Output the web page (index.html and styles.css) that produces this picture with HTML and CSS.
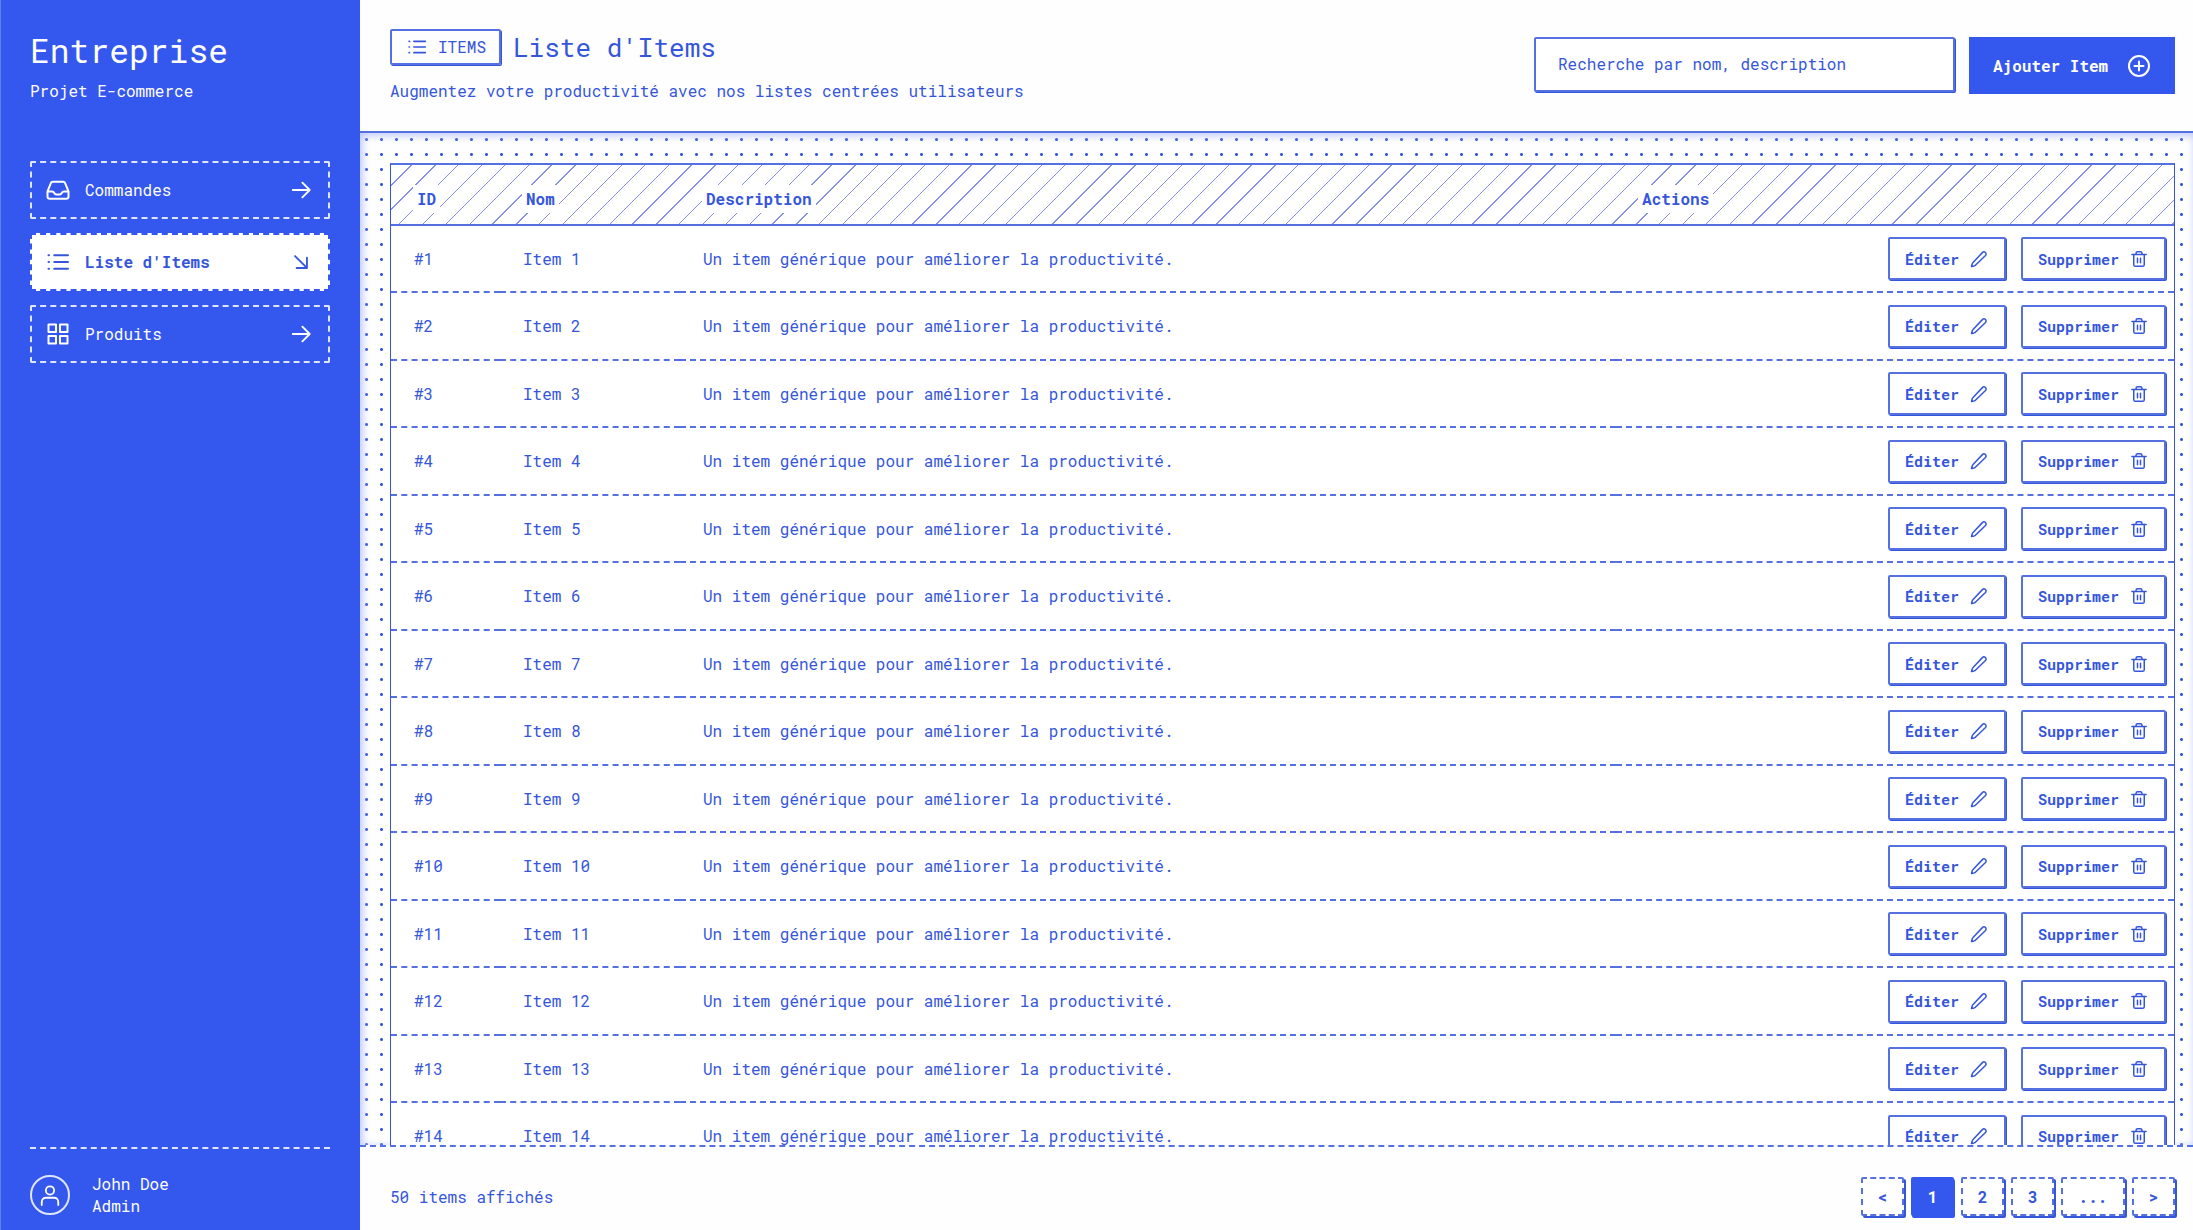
FILE: index.html
```html
<!DOCTYPE html>
<html lang="fr">
<head>
<meta charset="utf-8">
<title>Liste d'Items</title>
<link rel="stylesheet" href="styles.css">
</head>
<body>
<svg class="sprite" aria-hidden="true">
  <symbol id="inbox" viewBox="0 0 24 24"><path d="M1.500 13.500h4.610a2.250 2.250 0 0 1 2.010 1.240l.26.52a2.250 2.250 0 0 0 2.010 1.240h3.220a2.250 2.250 0 0 0 2.010-1.240l.26-.52a2.250 2.250 0 0 1 2.010-1.240h4.610M1.500 13.840V18.500a2.250 2.250 0 0 0 2.250 2.250h16.500a2.250 2.250 0 0 0 2.250-2.250v-4.660c0-.23-.04-.45-.1-.66L19.240 5.340a2.250 2.250 0 0 0-2.150-1.590H6.910a2.250 2.250 0 0 0-2.150 1.590L1.600 13.180a2.250 2.250 0 0 0-.1.66Z"/></symbol>
  <symbol id="list" viewBox="0 0 24 24"><path d="M8.25 5.25H22M8.25 12H22M8.25 18.75H22M2.5 5.25h.5M2.5 12h.5M2.5 18.75h.5"/></symbol>
  <symbol id="grid" viewBox="0 0 24 24"><path d="M2.500 2.500h7.500v7.500H2.500zM14 2.500h7.500v7.500H14zM2.500 14h7.500v7.500H2.500zM14 14h7.500v7.500H14z"/></symbol>
  <symbol id="arrow" viewBox="0 0 24 24"><path d="M13.5 4 21.500 12l-8 8M21.500 12H3"/></symbol>
  <symbol id="arrow-down" viewBox="0 0 24 24"><path d="m5.500 5.500 13 13m0 0V7.250m0 11.250H7.250"/></symbol>
  <symbol id="pencil" viewBox="0 0 24 24"><path d="M16.500 3.500a2.700 2.700 0 0 1 4.200 3.900L7.500 19.900a5 5 0 0 1-2.100 1.300l-3.400.9.9-3.400a5 5 0 0 1 1.200-2.100Z"/></symbol>
  <symbol id="trash" viewBox="0 0 24 24"><path d="M2.500 6h19M5 6v13.500A2.250 2.250 0 0 0 7.250 21.750h9.500A2.250 2.250 0 0 0 19 19.500V6M8 6V4.500a2.250 2.250 0 0 1 2.250-2.250h3.500A2.250 2.250 0 0 1 16 4.500V6M10 11v6M14 11v6"/></symbol>
  <symbol id="plus" viewBox="0 0 24 24"><path d="M12 7.500v9M7.500 12h9M22 12a10 10 0 1 1-20 0 10 10 0 0 1 20 0Z"/></symbol>
  <symbol id="user" viewBox="0 0 24 24"><path d="M16.500 7a4.500 4.500 0 1 1-9 0 4.500 4.500 0 0 1 9 0ZM3 23v-3.500a4.500 4.500 0 0 1 4.500-4.500h9a4.500 4.500 0 0 1 4.500 4.500V23"/></symbol>
</svg>
<div class="app">
  <aside class="sidebar">
    <div class="brand">
      <div class="brand-name">Entreprise</div>
      <div class="brand-project">Projet E-commerce</div>
    </div>
    <nav class="nav">
      <a class="nav-link" href="#commandes"><svg class="icon"><use href="#inbox"/></svg><span class="nav-label">Commandes</span><svg class="icon icon-arrow"><use href="#arrow"/></svg></a>
      <a class="nav-link active" href="#items" aria-current="page"><svg class="icon"><use href="#list"/></svg><span class="nav-label">Liste d'Items</span><svg class="icon icon-arrow"><use href="#arrow-down"/></svg></a>
      <a class="nav-link" href="#produits"><svg class="icon"><use href="#grid"/></svg><span class="nav-label">Produits</span><svg class="icon icon-arrow"><use href="#arrow"/></svg></a>
    </nav>
    <div class="profile">
      <span class="avatar"><svg class="icon"><use href="#user"/></svg></span>
      <div><div>John Doe</div><div>Admin</div></div>
    </div>
  </aside>
  <div class="content">
    <header class="header">
      <div class="heading">
        <div class="heading-row">
          <span class="badge"><svg class="icon"><use href="#list"/></svg>ITEMS</span>
          <h1>Liste d'Items</h1>
        </div>
        <p>Augmentez votre productivité avec nos listes centrées utilisateurs</p>
      </div>
      <div class="tools">
        <input class="search" type="search" aria-label="Recherche" placeholder="Recherche par nom, description">
        <button class="add" type="button">Ajouter Item<svg class="icon"><use href="#plus"/></svg></button>
      </div>
    </header>
    <main class="main">
      <table class="items">
        <colgroup><col class="col-id"><col class="col-name"><col class="col-desc"><col></colgroup>
        <thead><tr><th><span>ID</span></th><th><span>Nom</span></th><th><span>Description</span></th><th><span>Actions</span></th></tr></thead>
        <tbody id="rows"></tbody>
      </table>
    </main>
    <footer class="footer">
      <span>50 items affichés</span>
      <nav class="pages" aria-label="Pagination">
        <button type="button">&lt;</button>
        <button type="button" class="current">1</button>
        <button type="button">2</button>
        <button type="button">3</button>
        <button type="button" class="more">...</button>
        <button type="button">&gt;</button>
      </nav>
    </footer>
  </div>
</div>
<script src="items.js"></script>
</body>
</html>
```

FILE: styles.css
```css
:root {
  --blue: #3457ee;
  --ink: #3556db;
  --line: #5570e0;
}

* { box-sizing: border-box; }

body {
  margin: 0;
  color: var(--ink);
  background: #fefefe;
  font: 400 16px/22px "Roboto Mono", "DejaVu Sans Mono", monospace;
}

button, input { font: inherit; color: inherit; }
a { color: inherit; text-decoration: none; }
h1, p { margin: 0; }

.sprite { display: none; }

.icon {
  flex: none;
  width: 24px;
  height: 24px;
  fill: none;
  stroke: currentColor;
  stroke-width: 2;
  stroke-linecap: round;
  stroke-linejoin: round;
}

.app {
  display: grid;
  grid-template-columns: 360px minmax(0, 1fr);
  height: 100vh;
}

.sidebar {
  display: flex;
  flex-direction: column;
  padding: 29px 30px 13px 29px;
  color: #fff;
  background: var(--blue);
  border-left: 1px solid #5f7df5;
}

.brand-name { font-size: 33px; line-height: 42px; }
.brand-project { margin-top: 9px; }

.nav {
  display: flex;
  flex-direction: column;
  gap: 14px;
  margin-top: 59px;
}

.nav-link {
  display: flex;
  align-items: center;
  height: 58px;
  padding: 0 16px 0 14px;
  border: 2px dashed #dfe5ff;
  border-radius: 2px;
}

.nav-link.active {
  color: var(--ink);
  background: #fff;
  border-color: var(--blue);
  font-weight: 700;
}

.nav-label { flex: 1; padding-left: 15px; }
.icon-arrow { width: 22px; height: 22px; }

.profile {
  display: flex;
  align-items: center;
  gap: 22px;
  margin-top: auto;
  padding-top: 24px;
  border-top: 2px dashed #dfe5ff;
}

.avatar {
  display: grid;
  place-items: center;
  width: 40px;
  height: 40px;
  border: 2px solid #dfe5ff;
  border-radius: 50%;
}
.avatar .icon { width: 22px; height: 22px; }

.content {
  display: flex;
  flex-direction: column;
  min-width: 0;
  min-height: 0;
}

.header {
  display: flex;
  justify-content: space-between;
  flex: none;
  padding: 29px 18px 29px 30px;
  border-bottom: 2px solid var(--line);
}

.heading-row { display: flex; align-items: center; gap: 12px; }
.heading p { margin-top: 15px; }

h1 { font-size: 26px; line-height: 36px; font-weight: 400; }

.badge {
  display: flex;
  align-items: center;
  gap: 11px;
  height: 36px;
  padding: 0 13px 0 15px;
  border: 2px solid var(--line);
  border-radius: 2px;
  box-shadow: 1px 1px var(--ink);
}
.badge .icon { width: 20px; height: 20px; }

.tools { display: flex; align-items: flex-start; gap: 14px; padding-top: 8px; }

.search {
  width: 421px;
  height: 55px;
  padding: 0 22px 2px;
  border: 2px solid var(--line);
  border-radius: 2px;
  background: #fff;
  box-shadow: 1px 1px var(--ink);
  outline: 0;
}
.search::placeholder { color: var(--ink); opacity: 1; }

.add {
  display: flex;
  align-items: center;
  justify-content: space-between;
  width: 206px;
  height: 57px;
  padding: 0 24px;
  border: 0;
  color: #fff;
  background: var(--blue);
  font-weight: 700;
}

.main {
  flex: 1;
  min-height: 0;
  overflow: auto;
  scrollbar-width: none;
  padding: 30px 18px 30px 30px;
  background: radial-gradient(circle, var(--ink) 1px, transparent 2px) -1px -1px / 15px 15px #fefefe;
  box-shadow: inset 2px 2px 8px #b4c0ff;
}

.items {
  width: 100%;
  table-layout: fixed;
  border: 1px solid var(--ink);
  border-top: 2px solid var(--line);
  border-spacing: 0;
  background: #fff;
}

.col-id { width: 109px; }
.col-name { width: 180px; }
.col-desc { width: 52.5%; }

.items thead tr {
  background: repeating-linear-gradient(135deg,
    transparent 0 14px, #8490e8 14px 15px,
    transparent 15px 31px, #8490e8 31px 32px, transparent 32px 33px);
}

.items th {
  height: 61px;
  padding: 8px 22px 0;
  text-align: left;
  font-weight: 700;
  border-bottom: 2px solid var(--line);
}
.items th span { display: inline-block; padding: 3px 4px; background: #fff; }

.items td {
  height: 67px;
  padding: 0 23px;
  border-bottom: 2px dashed var(--line);
}
.items tbody tr:nth-child(even) td { height: 68px; }
.items td:last-child { padding-right: 8px; }

.actions { display: flex; justify-content: flex-end; gap: 15px; }

.action {
  display: flex;
  align-items: center;
  gap: 11px;
  height: 43px;
  padding: 0 16px 0 15px;
  border: 2px solid var(--line);
  border-radius: 2px;
  background: #fff;
  box-shadow: 1px 1px var(--ink);
  font-size: 15px;
  font-weight: 700;
}
.action .icon { width: 18px; height: 18px; }

.footer {
  display: flex;
  align-items: center;
  justify-content: space-between;
  flex: none;
  height: 85px;
  padding: 16px 18px 0 30px;
  border-top: 2px dashed var(--line);
}

.pages { display: flex; gap: 7px; }

.pages button {
  width: 43px;
  height: 39px;
  padding: 0;
  border: 2px dashed var(--line);
  border-radius: 2px;
  background: #fff;
  box-shadow: 2px 2px var(--ink);
  font-weight: 700;
}
.pages .more { width: 64px; }
.pages .current {
  color: #fff;
  background: var(--blue);
  border: 0;
  box-shadow: 1px 2px var(--blue);
}
```

FILE: items.js
```js
const rows = document.getElementById('rows');
const visibleRows = 14;
for (let n = 1; n <= visibleRows; n++) {
  rows.insertAdjacentHTML('beforeend', `<tr>
    <td>#${n}</td><td>Item ${n}</td><td>Un item générique pour améliorer la productivité.</td>
    <td><div class="actions">
      <button type="button" class="action">Éditer<svg class="icon"><use href="#pencil"/></svg></button>
      <button type="button" class="action">Supprimer<svg class="icon"><use href="#trash"/></svg></button>
    </div></td></tr>`);
}
```
